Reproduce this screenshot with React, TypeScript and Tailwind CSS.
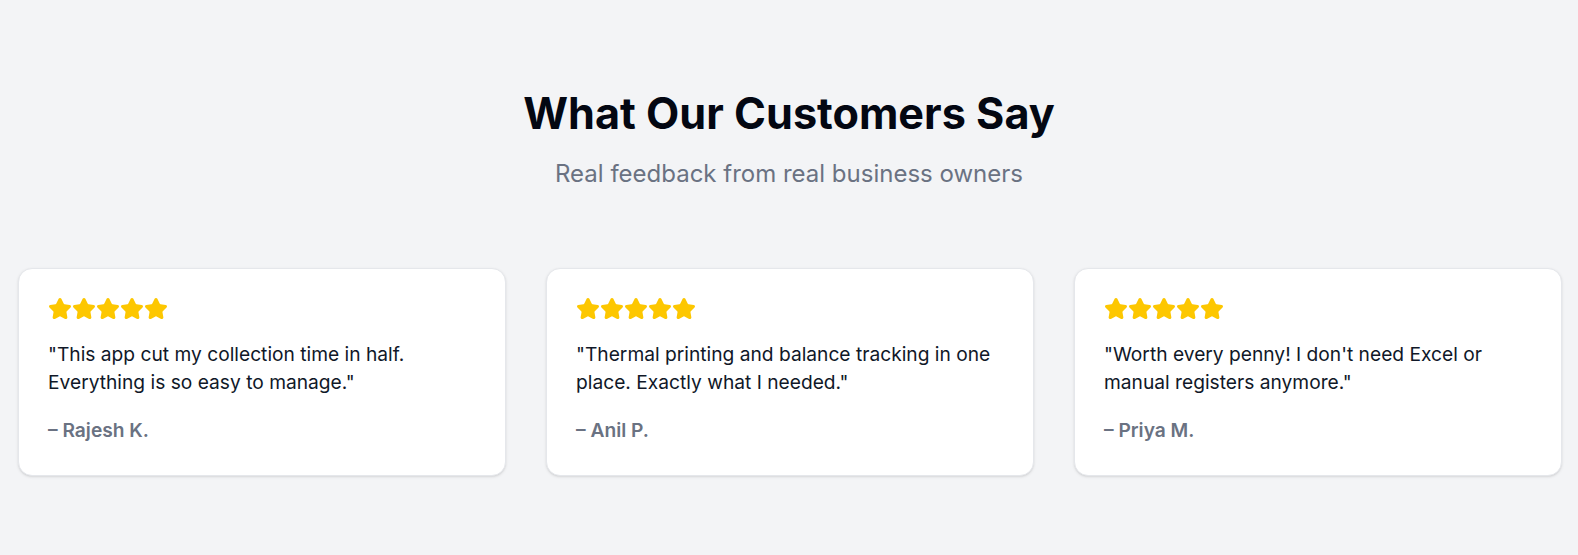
import React from "react";
import { Star } from "lucide-react";

const reviews = [
    {
        quote: "\"This app cut my collection time in half. Everything is so easy to manage.\"",
        name: "– Rajesh K.",
    },
    {
        quote: "\"Thermal printing and balance tracking in one place. Exactly what I needed.\"",
        name: "– Anil P.",
    },
    {
        quote: "\"Worth every penny! I don't need Excel or manual registers anymore.\"",
        name: "– Priya M.",
    },
];

function Stars() {
    return (
        <div className="flex mb-[19px]">
            {[0, 1, 2, 3, 4].map((i) => (
                <Star key={i} size={24} className="text-yellow-400 fill-yellow-400" />
            ))}
        </div>
    );
}

function ReviewCard({ quote, name }: { quote: string; name: string }) {
    return (
        <div className="bg-white border border-gray-200 rounded-[14px] shadow-sm px-[29px] pt-[28px] pb-[30px]">
            {/* rating */}
            <Stars />

            {/* quote */}
            <p className="text-[19.2px] leading-[28.8px] text-gray-900 mb-[19px]">{quote}</p>

            {/* author */}
            <span className="block text-[19.2px] leading-[28.8px] font-semibold text-gray-500">{name}</span>
        </div>
    );
}

export default function App() {
    return (
        <section className="min-h-[555px] bg-gray-100 pt-[89px] pb-20 font-['Inter',sans-serif]">
            {/* header */}
            <div className="text-center">
                <h2 className="text-[43.2px] leading-[48px] font-bold text-gray-950">What Our Customers Say</h2>
                <p className="mt-[20px] text-[24px] leading-[33.6px] text-gray-500">
                    Real feedback from real business owners
                </p>
            </div>

            {/* cards */}
            <div className="grid grid-cols-3 gap-10 pl-[18px] pr-4 mt-[77px]">
                {reviews.map((r) => (
                    <ReviewCard key={r.name} quote={r.quote} name={r.name} />
                ))}
            </div>
        </section>
    );
}
